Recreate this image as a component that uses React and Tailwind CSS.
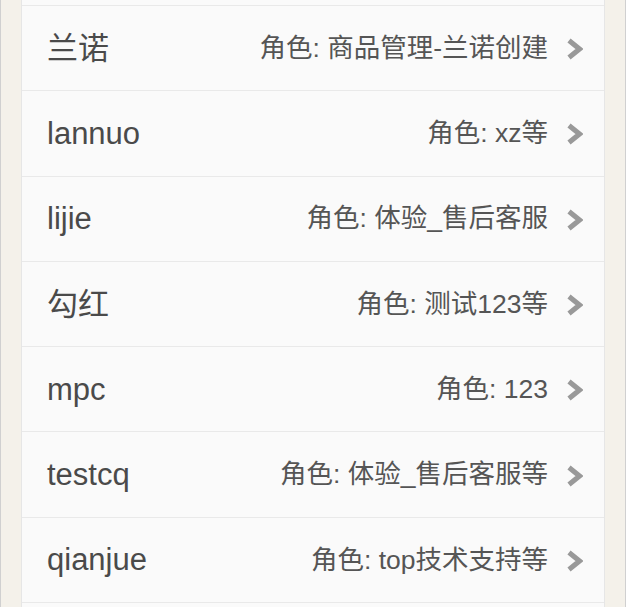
import React from 'react';

const users = [
  { name: '兰诺', role: '角色: 商品管理-兰诺创建' },
  { name: 'lannuo', role: '角色: xz等' },
  { name: 'lijie', role: '角色: 体验_售后客服' },
  { name: '勾红', role: '角色: 测试123等' },
  { name: 'mpc', role: '角色: 123' },
  { name: 'testcq', role: '角色: 体验_售后客服等' },
  { name: 'qianjue', role: '角色: top技术支持等' },
];

const Chevron = () => (
  <svg width="17" height="24" viewBox="0 0 17 24" className="shrink-0 mt-[2px]">
    <polyline points="3,3.5 13.5,12 3,20.5" fill="none" stroke="#999999" strokeWidth="5" strokeLinejoin="miter" />
  </svg>
);

const UserRow = ({ name, role }) => {
  return (
    <div className="flex items-center justify-between h-[85.3px] border-t border-[#e9e9e9] pl-[25px] pr-[21px]">
      <span className="text-[31px] text-[#4a4a4a] leading-none">{name}</span>
      <div className="flex items-center gap-[18px]">
        <span className="text-[26.5px] text-[#555555] leading-none">{role}</span>
        <Chevron />
      </div>
    </div>
  );
};

export default function App() {
  return (
    <div
      className="w-[626px] h-[607px] overflow-hidden bg-[#f4f1ea] border-x border-[#d0d0d0] px-[20px]"
      style={{ fontFamily: '"Liberation Sans", "Noto Sans CJK SC", sans-serif' }}
    >
      <div className="h-full bg-[#fafafa] border-x border-[#e6e6e6]">
        <div className="h-[5px]" />
        {users.map((u) => (
          <UserRow key={u.name} name={u.name} role={u.role} />
        ))}
        <div className="border-t border-[#e9e9e9] h-[20px]" />
      </div>
    </div>
  );
}
